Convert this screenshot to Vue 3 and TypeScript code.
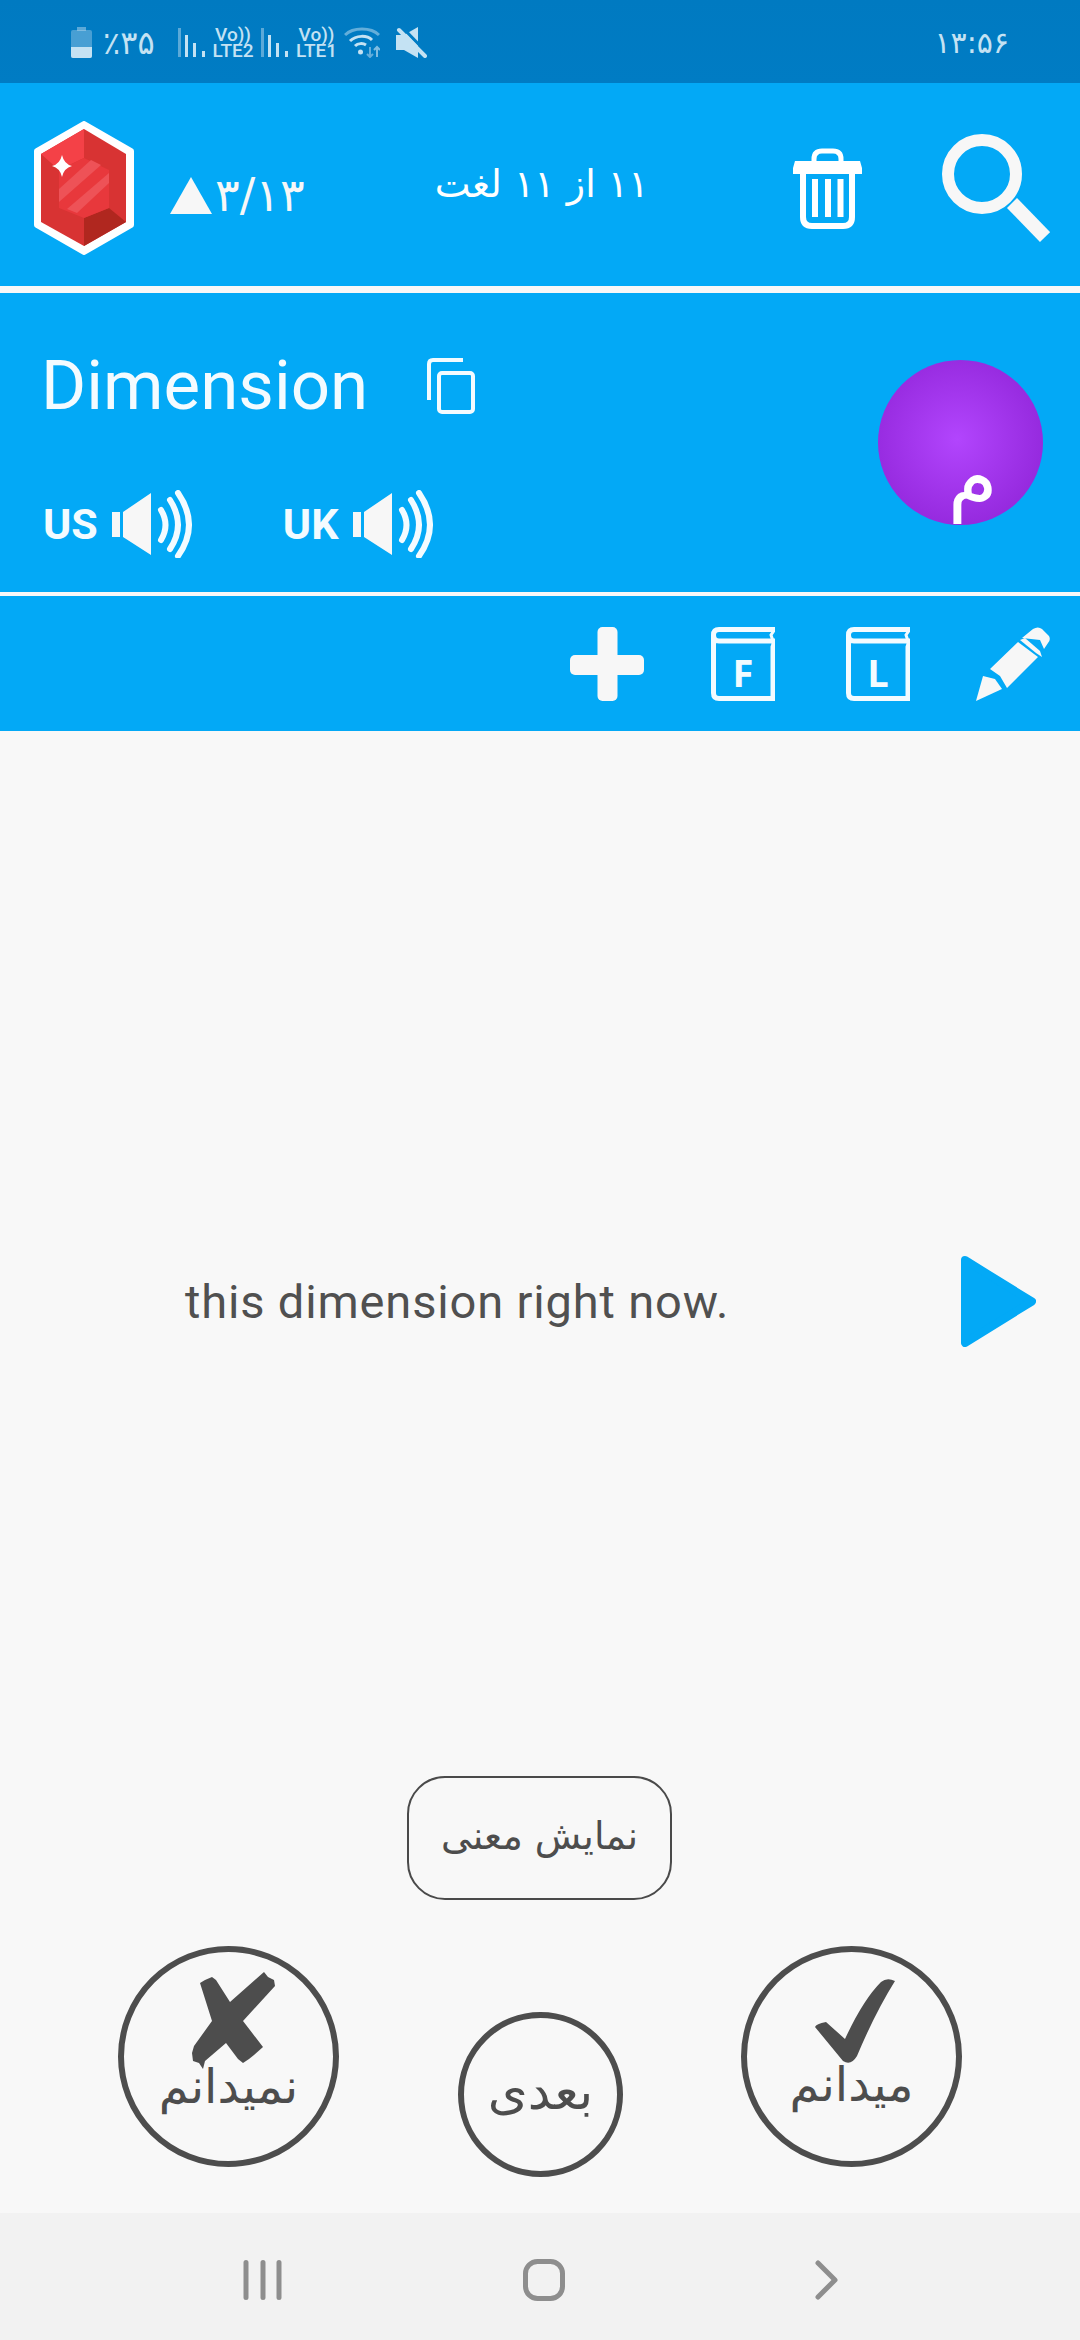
<script setup lang="ts">
// Review screen for a single vocabulary card
const word = 'Dimension';
const sentence = 'this dimension right now.';
const accents = ['US', 'UK'];
</script>

<template>
  <div class="screen">
    <!-- Android status bar -->
    <div class="status">
      <svg class="battery" width="21" height="31" viewBox="0 0 21 31">
        <rect x="6" y="0" width="9" height="4" fill="#b5d8ee" opacity=".5" />
        <rect x="0" y="3" width="21" height="28" rx="2" fill="#b5d8ee" opacity=".4" />
        <path d="M0 20H21V29a2 2 0 0 1-2 2H2a2 2 0 0 1-2-2Z" fill="#c4e2f3" />
      </svg>
      <span class="percent">٪۳۵</span>
      <svg class="signal first" width="27" height="29" viewBox="0 0 27 29">
        <rect x="0" y="0" width="3" height="29" fill="#b5d8ee" opacity=".5" />
        <rect x="7" y="7" width="3" height="22" fill="#c4e2f3" />
        <rect x="15" y="15" width="3" height="14" fill="#c4e2f3" />
        <rect x="24" y="23" width="3" height="6" fill="#c4e2f3" />
      </svg>
      <div class="sim sim-two"><span>Vo))</span><span>LTE2</span></div>
      <svg class="signal second" width="27" height="29" viewBox="0 0 27 29">
        <rect x="0" y="0" width="3" height="29" fill="#b5d8ee" opacity=".5" />
        <rect x="7" y="7" width="3" height="22" fill="#c4e2f3" />
        <rect x="15" y="15" width="3" height="14" fill="#c4e2f3" />
        <rect x="24" y="23" width="3" height="6" fill="#c4e2f3" />
      </svg>
      <div class="sim sim-one"><span>Vo))</span><span>LTE1</span></div>
      <svg class="wifi" width="36" height="31" viewBox="0 0 36 31" fill="none">
        <path d="M1 8C9 0 27 0 35 8" stroke="#b5d8ee" stroke-width="3" opacity=".55" />
        <path d="M6 14C12 8 23 8 28 13" stroke="#c4e2f3" stroke-width="3" />
        <path d="M11 19C14 16 19 16 22 18" stroke="#c4e2f3" stroke-width="3" />
        <circle cx="16.500" cy="25" r="2.500" fill="#c4e2f3" />
        <path d="M26 20V30M23 27l3 3 3-3" stroke="#b5d8ee" stroke-width="2" opacity=".55" />
        <path d="M33 30V20M30 23l3-3 3 3" stroke="#b5d8ee" stroke-width="2" opacity=".7" />
      </svg>
      <svg class="mute" width="31" height="31" viewBox="0 0 31 31">
        <path d="M0 8H8L22 0V31L8 23H0Z" fill="#c4e2f3" />
        <path d="M5 -1 32 27" stroke="#007cc4" stroke-width="3" />
        <path d="M3 3 29 29" stroke="#c4e2f3" stroke-width="4" stroke-linecap="round" />
      </svg>
      <span class="clock" dir="ltr">۱۳:۵۶</span>
    </div>

    <!-- Level, progress and actions -->
    <div class="topbar">
      <svg class="gem" width="101" height="134" viewBox="0 0 101 134">
        <path d="M51 3 98 30V104L51 131 4 104V30Z" fill="#fff" stroke="#fff" stroke-width="6" stroke-linejoin="round" />
        <path d="M51 8 93 33V101L51 125 8 101V33Z" fill="#d83333" />
        <path d="M51 8V37L26 49 8 33Z" fill="#f44147" />
        <path d="M51 125V97L76 87 93 101Z" fill="#b0271f" />
        <path d="M51 37 76 49V87L51 97 26 87V49Z" fill="#e8383c" />
        <path d="M26 68 58 39 68 44 26 81Z" fill="#ee5257" />
        <path d="M34 88 76 52V62L44 92Z" fill="#ee5257" />
        <path d="M29 34Q31 43 39 45 31 47 29 56 27 47 19 45 27 43 29 34Z" fill="#fff" />
      </svg>
      <div class="score">
        <svg width="42" height="37" viewBox="0 0 42 37"><path d="M21 0 42 37H0Z" fill="#f7f7f7" /></svg>
        <span dir="ltr">۳/۱۳</span>
      </div>
      <span class="progress" dir="rtl">۱۱ از ۱۱ لغت</span>
      <svg class="trash" width="69" height="81" viewBox="0 0 69 81" fill="none" stroke="#fff">
        <path d="M21 15V11Q21 3 29 3H40Q48 3 48 11V15" stroke-width="5" />
        <path d="M2 13H67L69 20V26H0V20Z" fill="#fff" stroke="none" />
        <path d="M10 24V69Q10 78 19 78H50Q59 78 59 69V24" stroke-width="6" />
        <path d="M22 31V69M35 31V69M47.500 31V69" stroke-width="6" />
      </svg>
      <svg class="search" width="108" height="108" viewBox="0 0 108 108" fill="none" stroke="#f7f7f7">
        <circle cx="40" cy="40" r="34" stroke-width="12" />
        <path d="M70 69 103 103" stroke-width="14" />
      </svg>
    </div>

    <!-- Current word -->
    <div class="word-panel">
      <div class="word-info">
        <div class="word-row">
          <span class="word">{{ word }}</span>
          <svg class="copy" width="48" height="56" viewBox="0 0 48 56" fill="none" stroke="#f3fbff" stroke-width="4">
            <path d="M2 42V6Q2 2 6 2H36" />
            <rect x="12" y="15" width="34" height="39" rx="3" />
          </svg>
        </div>
        <div class="audio-row">
          <div v-for="accent in accents" :key="accent" class="audio">
            <span class="accent">{{ accent }}</span>
            <svg width="82" height="68" viewBox="0 0 82 68" fill="none">
              <path d="M0 22H8V47H0ZM11 22 39 3V65L11 47Z" fill="#f7f7f7" />
              <path d="M49 20Q58 35 49 50M58 10Q74 35 58 59M66 3Q88 35 66 66" stroke="#f3fbff" stroke-width="6" stroke-linecap="round" />
            </svg>
          </div>
        </div>
      </div>
      <div class="avatar"><span>م</span></div>
    </div>

    <!-- Word tools -->
    <div class="toolbar">
      <svg class="plus" width="74" height="74" viewBox="0 0 74 74" fill="#f7f7f7">
        <rect x="27.500" y="0" width="20" height="74" rx="5" />
        <rect x="0" y="28" width="74" height="20" rx="5" />
      </svg>
      <svg v-for="letter in ['F', 'L']" :key="letter" class="book" :class="`book-${letter}`" width="64" height="74" viewBox="0 0 64 74" fill="none" stroke="#f3fbff" stroke-width="5">
        <path d="M64 2.500H8Q2.500 2.500 2.500 8V66Q2.500 71.500 8 71.500H62V20L64 14H8Q2.500 14 2.500 8" />
        <path d="M62 14 60 8 64 2" stroke-width="3" />
        <text x="32" y="60" text-anchor="middle" class="book-letter">{{ letter }}</text>
      </svg>
      <svg class="pencil" width="74" height="74" viewBox="0 0 74 74" fill="#f7f7f7">
        <path d="M0 74 7 49 19 52 26 62Z" />
        <path d="M14 42 42 15 62 30 31 61 24 49Z" />
        <path d="M46 11 57 2Q62-1 66 2L73 9Q75 13 72 16L68 22 64 13Z" />
        <path d="M44 13 49 11 64 24 66 30 60 26Z" />
      </svg>
    </div>

    <!-- Sentence and answers -->
    <main class="content">
      <div class="sentence-row">
        <p class="sentence">{{ sentence }}</p>
        <svg width="76" height="91" viewBox="0 0 76 91">
          <path d="M5 4 72 45.500 5 87Z" fill="#03a9f6" stroke="#03a9f6" stroke-width="8" stroke-linejoin="round" />
        </svg>
      </div>
      <button class="meaning" type="button">نمایش معنی</button>
      <div class="answers">
        <div class="answer unknown">
          <svg width="84" height="99" viewBox="0 0 84 99">
            <path d="M9 12 14 9 21 6 25 9 39 31 73 1 77 6 83 9 84 15 52 50 72 76 63 84 58 88 52 92 47 88 35 72 14 90 12 98 8 92 2 90 1 82 3 75 21 50Z" fill="#4d4d4d" />
          </svg>
          <span class="answer-label">نمیدانم</span>
        </div>
        <div class="answer next"><span class="answer-label">بعدی</span></div>
        <div class="answer known">
          <svg width="80" height="85" viewBox="0 0 80 85">
            <path d="M0 49Q1 46 11 44L30 61Q48 22 66 4 72-1 80 3 60 35 42 78 36 88 28 83Z" fill="#4d4d4d" />
          </svg>
          <span class="answer-label">میدانم</span>
        </div>
      </div>
    </main>

    <!-- System navigation -->
    <nav class="navbar">
      <svg width="40" height="40" viewBox="0 0 40 40" stroke="#8e8e8e" stroke-width="5" stroke-linecap="round">
        <path d="M3 2.500V37.500M20 2.500V37.500M36 2.500V37.500" />
      </svg>
      <svg class="nav-home" width="42" height="42" viewBox="0 0 42 42" fill="none" stroke="#8e8e8e" stroke-width="5">
        <rect x="2.500" y="2.500" width="37" height="37" rx="12" />
      </svg>
      <svg class="nav-back" width="23" height="40" viewBox="0 0 23 40" fill="none" stroke="#8e8e8e" stroke-width="5" stroke-linecap="round" stroke-linejoin="round">
        <path d="M3 3 20 20 3 37" />
      </svg>
    </nav>
  </div>
</template>

<style>
body {
  margin: 0;
  background: #f8f8f8;
}
</style>

<style scoped>
.screen {
  width: 1080px;
  height: 2340px;
  display: flex;
  flex-direction: column;
  overflow: hidden;
  font-family: Roboto, "DejaVu Sans", sans-serif;
}

.status {
  height: 83px;
  flex: none;
  display: flex;
  align-items: center;
  box-sizing: border-box;
  padding: 2px 71px 0;
  background: linear-gradient(#007ac1, #007cc4);
  color: #c4e2f3;
}

.percent {
  margin-left: 11px;
  width: 52px;
  font: 32px "DejaVu Sans", sans-serif;
}

.signal.first {
  margin-left: 23px;
}

.signal.second {
  margin-left: 7px;
}

.sim {
  display: flex;
  flex-direction: column;
  align-items: center;
  width: 42px;
  margin-left: 7px;
  font: 500 19px/16px Roboto, sans-serif;
}

.sim-one {
  width: 39px;
  margin-left: 9px;
}

.wifi {
  margin-left: 8px;
}

.mute {
  margin-left: 16px;
}

.clock {
  margin-left: auto;
  font: 30px "DejaVu Sans", sans-serif;
}

.topbar {
  height: 203px;
  flex: none;
  display: flex;
  align-items: center;
  box-sizing: border-box;
  padding: 7px 30px 0 33px;
  background: #03a9f6;
}

.score {
  display: flex;
  align-items: center;
  gap: 3px;
  margin: 14px 0 0 36px;
  color: #f7f7f7;
  font: 46px/48px "DejaVu Sans", sans-serif;
  letter-spacing: -3px;
}

.progress {
  margin: 0 0 8px 130px;
  color: #fff;
  font: 38px "DejaVu Sans", sans-serif;
}

.trash {
  margin-left: auto;
}

.search {
  margin-left: 80px;
}

.word-panel {
  height: 299px;
  flex: none;
  display: flex;
  justify-content: space-between;
  box-sizing: border-box;
  margin-top: 7px;
  padding: 0 37px 0 41px;
  background: #03a9f6;
}

.word-info {
  padding-top: 62px;
}

.word-row {
  display: flex;
  align-items: center;
  height: 62px;
}

.word {
  color: #f3fbff;
  font-size: 69px;
  line-height: 62px;
}

.copy {
  margin-left: 59px;
}

.audio-row {
  display: flex;
  gap: 89px;
  margin: 73px 0 0 2px;
}

.audio {
  display: flex;
  align-items: center;
  gap: 14px;
}

.accent {
  color: #f3fbff;
  font-size: 43px;
  font-weight: 700;
}

.avatar {
  width: 165px;
  height: 165px;
  margin-top: 67px;
  border-radius: 50%;
  overflow: hidden;
  position: relative;
  background: radial-gradient(circle at 48% 48%, #b245fd, #8a1fd2 100%);
}

.avatar span {
  position: absolute;
  left: 70px;
  top: 78px;
  color: #fff;
  font: 80px/1 "DejaVu Sans", sans-serif;
}

.toolbar {
  height: 135px;
  flex: none;
  display: flex;
  align-items: center;
  justify-content: flex-end;
  box-sizing: border-box;
  margin-top: 4px;
  padding-right: 30px;
  background: #03a9f6;
}

.book-F {
  margin-left: 67px;
}

.book-L {
  margin-left: 71px;
}

.pencil {
  margin-left: 66px;
}

.book-letter {
  fill: #f3fbff;
  stroke: none;
  font: 700 38px "Open Sans", sans-serif;
}

.content {
  flex: 1;
  display: flex;
  flex-direction: column;
  background: #f8f8f8;
}

.sentence-row {
  display: flex;
  align-items: center;
  justify-content: space-between;
  margin-top: 525px;
  padding: 0 44px 0 185px;
}

.sentence {
  margin: 0;
  color: #505050;
  font-size: 47px;
  letter-spacing: .85px;
  line-height: 60px;
}

.meaning {
  width: 265px;
  height: 124px;
  margin: 429px 0 0 407px;
  padding: 0 0 4px;
  border: 2px solid #4a4a4a;
  border-radius: 38px;
  background: transparent;
  color: #4d4d4d;
  font: 38px "DejaVu Sans", sans-serif;
}

.answers {
  display: flex;
  align-items: flex-start;
  margin-top: 46px;
  padding-left: 118px;
}

.answer {
  width: 221px;
  height: 221px;
  flex: none;
  display: flex;
  flex-direction: column;
  align-items: center;
  box-sizing: border-box;
  border: 6px solid #4d4d4d;
  border-radius: 50%;
  color: #4d4d4d;
}

.answer-label {
  font: 48px/48px "DejaVu Sans", sans-serif;
}

.unknown {
  padding-top: 19px;
}

.unknown svg {
  margin-left: 8px;
}

.unknown .answer-label {
  margin-top: -8px;
}

.known {
  margin-left: 118px;
  padding-top: 26px;
}

.known svg {
  margin-left: 6px;
}

.known .answer-label {
  margin-top: -3px;
}

.next {
  width: 165px;
  height: 165px;
  margin: 66px 0 0 119px;
  padding-top: 50px;
}

.next .answer-label {
  font-size: 51px;
}

.navbar {
  height: 127px;
  flex: none;
  display: flex;
  align-items: center;
  box-sizing: border-box;
  padding: 7px 0 0 243px;
  background: #f2f2f2;
}

.nav-home {
  margin-left: 240px;
}

.nav-back {
  margin-left: 250px;
}
</style>
